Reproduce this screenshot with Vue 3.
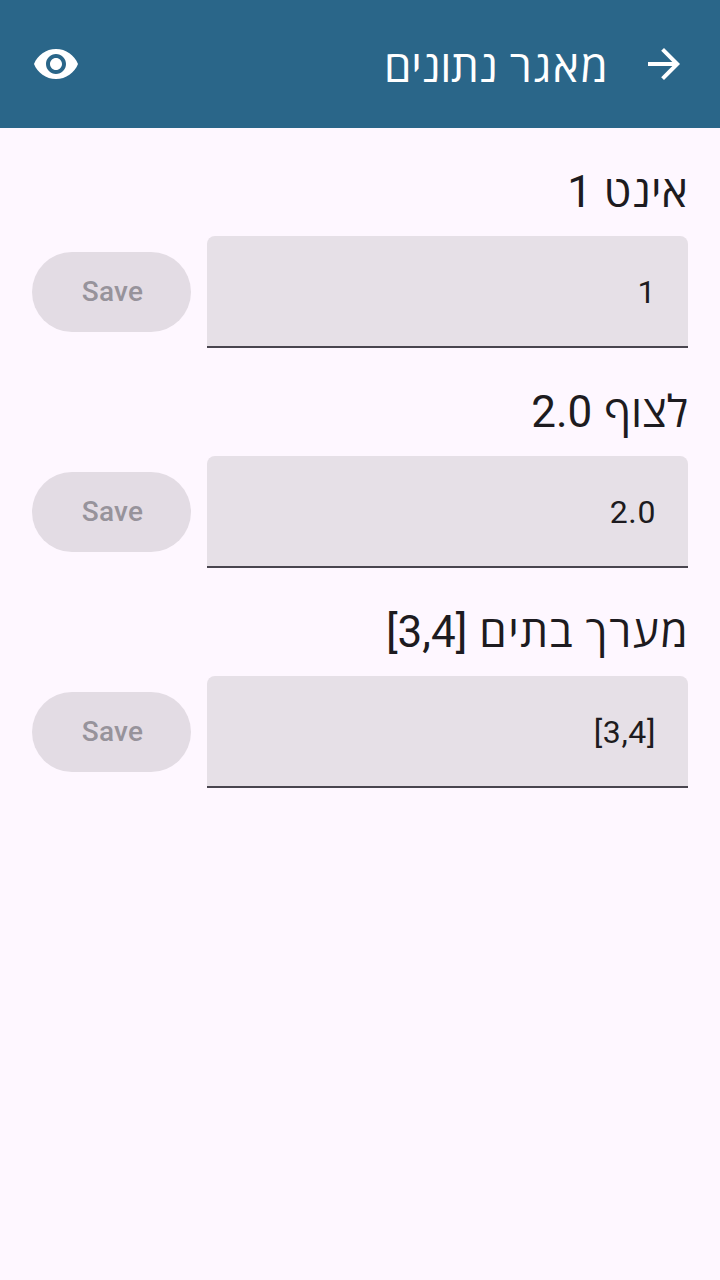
<script setup>
const fields = [
  { words: [{ t: 'אינט', c: 'snug' }], suffix: '1', value: '1' },
  { words: [{ t: 'לצוף', c: '' }], suffix: '2.0', value: '2.0' },
  { words: [{ t: 'מערך', c: 'wide' }, { t: 'בתים', c: 'open' }], suffix: '[3,4]', value: '[3,4]' },
]
</script>

<template>
  <div class="screen" dir="rtl">
    <header class="bar">
      <svg viewBox="0 0 24 24"><path d="M12 4l-1.41 1.41L16.17 11H4v2h12.17l-5.58 5.59L12 20l8-8z" /></svg>
      <h1><span class="wide">מאגר</span> <span class="tight">נתונים</span></h1>
      <svg viewBox="0 0 24 24"><path d="M12 4.5C7 4.5 2.73 7.61 1 12c1.73 4.39 6 7.5 11 7.5s9.27-3.11 11-7.5c-1.73-4.39-6-7.5-11-7.5zM12 17c-2.76 0-5-2.24-5-5s2.24-5 5-5 5 2.24 5 5-2.24 5-5 5zm0-8c-1.66 0-3 1.34-3 3s1.34 3 3 3 3-1.34 3-3-1.34-3-3-3z" /></svg>
    </header>
    <main>
      <section v-for="f in fields" :key="f.value">
        <h2><template v-for="w in f.words" :key="w.t"><span :class="w.c">{{ w.t }}</span>{{ ' ' }}</template><bdi dir="ltr">{{ f.suffix }}</bdi></h2>
        <div class="row">
          <div class="field"><bdi dir="ltr">{{ f.value }}</bdi></div>
          <button disabled>Save</button>
        </div>
      </section>
    </main>
  </div>
</template>

<style>
body { background: #fef7ff; }
</style>
<style scoped>
.screen { height: 1280px; background: #fef7ff; font-family: Roboto, "Open Sans", sans-serif; color: #1d1b20; }
.bar { height: 128px; background: #2a6689; display: flex; align-items: center; padding: 0 32px; box-sizing: border-box; }
svg { width: 48px; height: 48px; fill: #fff; flex: none; }
h1 { flex: 1; margin: 0 32px 0 0; padding-top: 6px; font-size: 44px; font-weight: 400; line-height: 56px; color: #fff; white-space: nowrap; word-spacing: 1.5px; }
main { padding: 36px 32px 0; }
section { height: 220px; }
h2 { margin: 0 0 16px; height: 56px; font-size: 44px; line-height: 56px; font-weight: 400; white-space: nowrap; word-spacing: 1px; }
.wide { letter-spacing: 1.7px; margin-right: -1.5px; }
.open { letter-spacing: 1.4px; }
.snug { letter-spacing: .3px; }
.tight { letter-spacing: -.3px; }
.row { display: flex; align-items: center; gap: 16px; }
.field { flex: 1; height: 112px; box-sizing: border-box; border-bottom: 2px solid #49454f; border-radius: 8px 8px 0 0; background: #e6e0e7; padding: 0 32px; font-size: 32px; line-height: 112px; letter-spacing: .6px; }
button { width: 159px; height: 80px; border: 0; border-radius: 40px; background: #e3dce4; color: #97939b; font: 500 28px/80px Roboto, sans-serif; letter-spacing: .2px; padding: 0 0 0 2px; }
</style>
